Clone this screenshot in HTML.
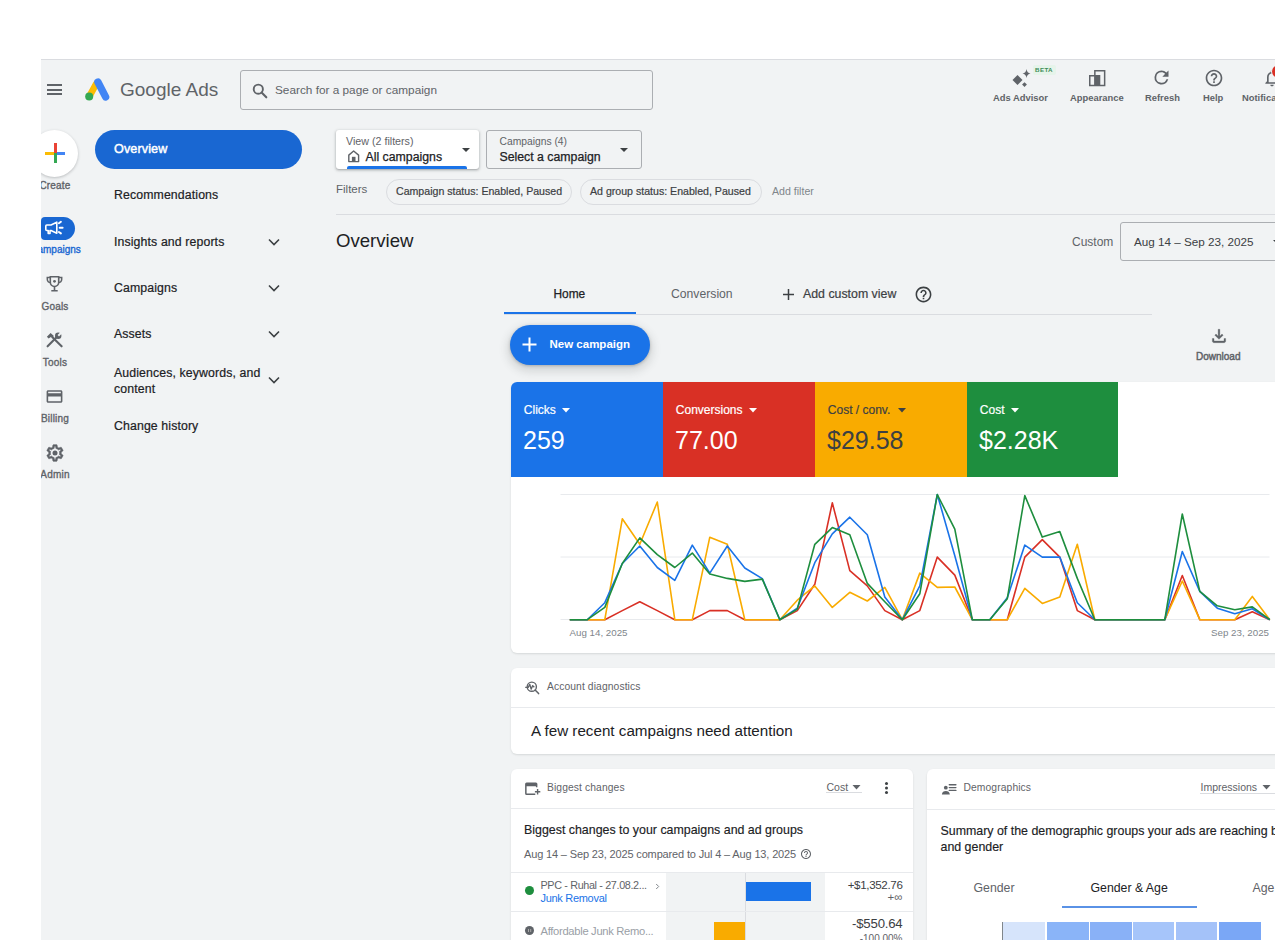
<!DOCTYPE html>
<html><head><meta charset="utf-8">
<style>
*{box-sizing:border-box;margin:0;padding:0}
html,body{width:1275px;height:940px;overflow:hidden;background:#fff;font-family:"Liberation Sans",sans-serif;color:#202124}
.a{position:absolute;white-space:nowrap}
#app{position:absolute;left:41px;top:59px;width:1234px;height:881px;background:#f1f3f4;border-top:1px solid #dadce0}
.card{position:absolute;background:#fff;border-radius:6px;box-shadow:0 1px 2px rgba(60,64,67,.15)}
.rl{position:absolute;font-size:10px;color:#5f6368;font-weight:400;-webkit-text-stroke:.35px currentColor;letter-spacing:.2px;text-align:center;width:60px;left:25px;margin-top:1px}
.nav{position:absolute;left:114px;font-size:12.3px;color:#202124;letter-spacing:.12px;-webkit-text-stroke:.2px currentColor}
.chev{position:absolute;left:268px;width:12px;height:8px}
.tl{position:absolute;font-size:9.4px;font-weight:700;color:#5f6368}
.chip{border:1px solid #dadce0;border-radius:13px}
.tile{position:absolute;top:0;height:95.5px;color:#fff}
.tl2{position:absolute;left:13.3px;top:21px;font-size:12px;color:#fff;-webkit-text-stroke:.2px currentColor}
.tri{position:absolute;left:51px;top:26px;width:8px;height:5px}
.tv{position:absolute;left:12.5px;top:44px;font-size:25px;color:#fff}
</style></head><body>
<div id="app"></div>

<!-- header -->
<div class="a" style="left:47px;top:84px;width:15px;height:2px;background:#5f6368"></div>
<div class="a" style="left:47px;top:88.5px;width:15px;height:2px;background:#5f6368"></div>
<div class="a" style="left:47px;top:93px;width:15px;height:2px;background:#5f6368"></div>
<svg class="a" style="left:84px;top:78px" width="28" height="24" viewBox="0 0 28 24">
  <path d="M12.2 5.8 L5.2 18.6" stroke="#fbbc04" stroke-width="6.6" stroke-linecap="round"/>
  <path d="M13.9 4 L21.6 18.9" stroke="#4285f4" stroke-width="7.4" stroke-linecap="round"/>
  <circle cx="5.2" cy="18.6" r="4" fill="#34a853"/>
</svg>
<div class="a" style="left:120px;top:79px;font-size:19px;color:#5f6368">Google Ads</div>
<div class="a" style="left:240px;top:70px;width:413px;height:40px;border:1px solid #abaeb2;border-radius:3px"></div>
<svg class="a" style="left:251px;top:82px" width="18" height="18" viewBox="0 0 18 18"><circle cx="7.3" cy="7.2" r="4.6" fill="none" stroke="#5f6368" stroke-width="1.9"/><path d="M10.6 10.6 L15.3 15.3" stroke="#5f6368" stroke-width="2.1" stroke-linecap="round"/></svg>
<div class="a" style="left:275px;top:83px;font-size:11.8px;color:#5f6368">Search for a page or campaign</div>

<!-- top right -->
<svg class="a" style="left:1010px;top:66px" width="24" height="24" viewBox="0 0 24 24">
  <path d="M7.5 9 L12.5 14 L7.5 19 L2.5 14Z" fill="#5f6368"/>
  <path d="M16.5 3 Q17 7 20.5 7.5 Q17 8 16.5 12 Q16 8 12.5 7.5 Q16 7 16.5 3Z" fill="#5f6368"/>
  <path d="M14.5 16.2 L16.9 18.6 L14.5 21 L12.1 18.6Z" fill="#5f6368"/>
</svg>
<div class="a" style="left:1032.5px;top:64.5px;width:23px;height:10.5px;border-radius:2px;background:#e6f4ea;font-size:6.2px;font-weight:700;color:#3d8c57;text-align:center;line-height:10.5px;letter-spacing:.35px">BETA</div>
<div class="tl a" style="left:993px;top:92px">Ads Advisor</div>
<svg class="a" style="left:1089px;top:70px" width="17" height="17" viewBox="0 0 17 17">
  <path d="M5.1 0 H16.4 V16.3 H0 V5 H5.1 Z M1.5 6.5 H5.1 V14.8 H1.5 Z M6.6 1.5 H14.9 V14.8 H11.3 V5 H6.6 Z" fill="#5f6368" fill-rule="evenodd"/>
</svg>
<div class="tl a" style="left:1070px;top:92px">Appearance</div>
<svg class="a" style="left:1151px;top:67px" width="21" height="21" viewBox="0 0 24 24"><path d="M17.65 6.35A7.96 7.96 0 0 0 12 4a8 8 0 1 0 7.73 10h-2.08A6 6 0 1 1 12 6c1.66 0 3.14.69 4.22 1.78L13 11h7V4l-2.35 2.35z" fill="#5f6368"/></svg>
<div class="tl a" style="left:1145px;top:92px">Refresh</div>
<svg class="a" style="left:1204px;top:68px" width="20" height="20" viewBox="0 0 24 24"><path d="M11 18h2v-2h-2v2zm1-16C6.48 2 2 6.48 2 12s4.48 10 10 10 10-4.48 10-10S17.52 2 12 2zm0 18c-4.41 0-8-3.59-8-8s3.59-8 8-8 8 3.59 8 8-3.59 8-8 8zm0-14c-2.21 0-4 1.79-4 4h2c0-1.1.9-2 2-2s2 .9 2 2c0 2-3 1.75-3 5h2c0-2.25 3-2.5 3-5 0-2.21-1.79-4-4-4z" fill="#5f6368"/></svg>
<div class="tl a" style="left:1203px;top:92px">Help</div>
<svg class="a" style="left:1262px;top:68px" width="20" height="20" viewBox="0 0 24 24"><path d="M12 22c1.1 0 2-.9 2-2h-4c0 1.1.9 2 2 2zm6-6v-5c0-3.07-1.64-5.64-4.5-6.32V4c0-.83-.67-1.5-1.5-1.5s-1.5.67-1.5 1.5v.68C7.63 5.36 6 7.92 6 11v5l-2 2v1h16v-1l-2-2zm-2 1H8v-6c0-2.48 1.51-4.5 4-4.5s4 2.02 4 4.5v6z" fill="#5f6368"/></svg>
<div class="a" style="left:1271.5px;top:64.5px;width:13px;height:13px;border-radius:50%;background:#d93025;box-shadow:0 0 0 1px #f1f3f4"></div>
<div class="tl a" style="left:1242px;top:92px">Notifications</div>

<!-- left rail -->
<div class="a" style="left:31px;top:130px;width:47px;height:47px;border-radius:50%;background:#fff;box-shadow:0 1px 3px rgba(60,64,67,.3)"></div>
<div class="a" style="left:45px;top:151.5px;width:10px;height:3px;background:#fbbc04"></div>
<div class="a" style="left:55px;top:151.5px;width:10px;height:3px;background:#4285f4"></div>
<div class="a" style="left:54px;top:143px;width:3px;height:10px;background:#ea4335"></div>
<div class="a" style="left:54px;top:153px;width:3px;height:10px;background:#34a853"></div>
<div class="rl" style="top:179px">Create</div>
<div class="a" style="left:41px;top:217px;width:34px;height:22.5px;border-radius:4px 11.5px 11.5px 4px;background:#1967d2"></div>
<svg class="a" style="left:40px;top:216px" width="24" height="24" viewBox="0 0 24 24"><path d="M6.8 9 H11 L16.8 6.2 V17.3 L11 14.5 H10 V17.5 H8.2 V14.5 H6.8 A1 1 0 0 1 5.8 13.5 V10 A1 1 0 0 1 6.8 9Z" fill="none" stroke="#fff" stroke-width="1.6" stroke-linejoin="round"/><path d="M18.9 7.2 L20.9 5.8 M19.7 11.7 H22.6 M18.9 16 L20.9 17.4" stroke="#fff" stroke-width="2" stroke-linecap="round"/></svg>
<div class="rl" style="top:243px;color:#1967d2;letter-spacing:0;left:25.5px">Campaigns</div>
<svg class="a" style="left:46px;top:275px" width="17" height="17" viewBox="0 0 17 17"><path d="M4.3 1.8 H12.7 V7.3 A4.2 4.2 0 0 1 4.3 7.3 Z" fill="none" stroke="#5f6368" stroke-width="1.6"/><path d="M4.3 2.6 H1.3 V4.3 A3.2 3.2 0 0 0 4.6 7.6 M12.7 2.6 H15.7 V4.3 A3.2 3.2 0 0 1 12.4 7.6" fill="none" stroke="#5f6368" stroke-width="1.5"/><path d="M8.5 11.5 V15.3 M5.3 15.7 H11.7" stroke="#5f6368" stroke-width="1.6"/><circle cx="8.5" cy="6.3" r="1.4" fill="#5f6368"/></svg>
<div class="rl" style="top:300px">Goals</div>
<svg class="a" style="left:46px;top:332px" width="17" height="16" viewBox="0 0 17 16"><path d="M15.6 14.3 L6.2 4.9" stroke="#5f6368" stroke-width="2.1" stroke-linecap="round"/><path d="M0.9 4.8 L4.6 1.1 L7.9 3.9 L6.3 5.5 L5.3 4.7 L2.6 6.6 Z" fill="#5f6368"/><path d="M1.6 14.3 L10.3 5.6" stroke="#5f6368" stroke-width="2.1" stroke-linecap="round"/><circle cx="12.2" cy="3.8" r="3.2" fill="#5f6368"/><path d="M12.3 3.7 L15.6 0.4" stroke="#f1f3f4" stroke-width="2"/></svg>
<div class="rl" style="top:356px">Tools</div>
<svg class="a" style="left:45px;top:387px" width="19" height="19" viewBox="0 0 24 24"><path d="M20 4H4c-1.11 0-1.99.89-1.99 2L2 18c0 1.11.89 2 2 2h16c1.11 0 2-.89 2-2V6c0-1.11-.89-2-2-2zm0 14H4v-6h16v6zm0-10H4V6h16v2z" fill="#5f6368"/></svg>
<div class="rl" style="top:412px">Billing</div>
<svg class="a" style="left:44.5px;top:442.5px" width="20" height="20" viewBox="0 0 24 24"><path d="M19.43 12.98c.04-.32.07-.64.07-.98s-.03-.66-.07-.98l2.11-1.65c.19-.15.24-.42.12-.64l-2-3.46a.5.5 0 0 0-.61-.22l-2.49 1c-.52-.4-1.08-.73-1.69-.98l-.38-2.65A.49.49 0 0 0 14 2h-4c-.25 0-.46.18-.49.42l-.38 2.65c-.61.25-1.17.59-1.69.98l-2.49-1a.57.57 0 0 0-.18-.03c-.17 0-.34.09-.43.25l-2 3.46c-.13.22-.07.49.12.64l2.11 1.65c-.04.32-.07.65-.07.98s.03.66.07.98l-2.11 1.65c-.19.15-.24.42-.12.64l2 3.46a.5.5 0 0 0 .61.22l2.49-1c.52.4 1.08.73 1.69.98l.38 2.65c.03.24.24.42.49.42h4c.25 0 .46-.18.49-.42l.38-2.65c.61-.25 1.17-.59 1.69-.98l2.49 1c.06.02.12.03.18.03.17 0 .34-.09.43-.25l2-3.46c.12-.22.07-.49-.12-.64l-2.11-1.65zm-1.98-1.71c.04.31.05.52.05.73 0 .21-.02.43-.05.73l-.14 1.13.89.7 1.08.84-.7 1.21-1.27-.51-1.04-.42-.9.68c-.43.32-.84.56-1.25.73l-1.06.43-.16 1.13-.2 1.35h-1.4l-.19-1.35-.16-1.13-1.06-.43c-.43-.18-.83-.41-1.23-.71l-.91-.7-1.06.43-1.27.51-.7-1.21 1.08-.84.89-.7-.14-1.13c-.03-.31-.05-.54-.05-.74s.02-.43.05-.73l.14-1.13-.89-.7-1.08-.84.7-1.21 1.27.51 1.04.42.9-.68c.43-.32.84-.56 1.25-.73l1.06-.43.16-1.13.2-1.35h1.39l.19 1.35.16 1.13 1.06.43c.43.18.83.41 1.23.71l.91.7 1.06-.43 1.27-.51.7 1.21-1.07.85-.89.7.14 1.13z" fill="#5f6368" stroke="#5f6368" stroke-width=".7"/><circle cx="12" cy="12" r="3" fill="#5f6368"/></svg>
<div class="rl" style="top:468px">Admin</div>

<!-- nav -->
<div class="a" style="left:95px;top:130px;width:207px;height:39px;border-radius:20px;background:#1967d2"></div>
<div class="nav a" style="top:142px;color:#fff;font-weight:400;font-size:12.6px;-webkit-text-stroke:.45px #fff">Overview</div>
<div class="nav a" style="top:188px">Recommendations</div>
<div class="nav a" style="top:235px">Insights and reports</div>
<div class="nav a" style="top:281px">Campaigns</div>
<div class="nav a" style="top:327px">Assets</div>
<div class="nav a" style="top:365px;line-height:16px">Audiences, keywords, and<br>content</div>
<div class="nav a" style="top:419px">Change history</div>
<svg class="chev a" style="top:238px" viewBox="0 0 12 8"><path d="M1 1.5 L6 6.5 L11 1.5" fill="none" stroke="#3c4043" stroke-width="1.6"/></svg>
<svg class="chev a" style="top:284px" viewBox="0 0 12 8"><path d="M1 1.5 L6 6.5 L11 1.5" fill="none" stroke="#3c4043" stroke-width="1.6"/></svg>
<svg class="chev a" style="top:330px" viewBox="0 0 12 8"><path d="M1 1.5 L6 6.5 L11 1.5" fill="none" stroke="#3c4043" stroke-width="1.6"/></svg>
<svg class="chev a" style="top:376px" viewBox="0 0 12 8"><path d="M1 1.5 L6 6.5 L11 1.5" fill="none" stroke="#3c4043" stroke-width="1.6"/></svg>

<!-- MAIN -->

<!-- view/campaign selectors -->
<div class="a" style="left:336px;top:130px;width:143px;height:39px;background:#fff;border-radius:3px;box-shadow:0 1px 2px rgba(60,64,67,.3),0 1px 3px 1px rgba(60,64,67,.15)"></div>
<div class="a" style="left:346px;top:135px;font-size:10.7px;color:#5f6368">View (2 filters)</div>
<svg class="a" style="left:348px;top:150px" width="12" height="13" viewBox="0 0 12 13"><path d="M0.8 11.6 V5.1 L5.65 1 L10.6 5.1 V11.6 Z" fill="none" stroke="#5f6368" stroke-width="1.4" stroke-linejoin="round"/><rect x="3.9" y="6.8" width="3.6" height="4.8" fill="#5f6368"/></svg>
<div class="a" style="left:365.5px;top:150px;font-size:12.3px;color:#202124;-webkit-text-stroke:.25px #202124">All campaigns</div>
<div class="a" style="left:347px;top:166.3px;width:120px;height:3px;border-radius:2px 2px 0 0;background:#1a73e8"></div>
<svg class="a" style="left:461px;top:147px" width="10" height="6" viewBox="0 0 10 6"><path d="M1 1 H9 L5 5Z" fill="#3c4043"/></svg>
<div class="a" style="left:485.5px;top:130px;width:156px;height:39px;border:1px solid #abaeb2;border-radius:3px"></div>
<div class="a" style="left:499.5px;top:136px;font-size:10.3px;color:#5f6368">Campaigns (4)</div>
<div class="a" style="left:499.5px;top:150px;font-size:12.3px;color:#202124;-webkit-text-stroke:.25px #202124">Select a campaign</div>
<svg class="a" style="left:619px;top:147px" width="10" height="6" viewBox="0 0 10 6"><path d="M1 1 H9 L5 5Z" fill="#3c4043"/></svg>

<div class="a" style="left:336px;top:183px;font-size:11.5px;color:#5f6368">Filters</div>
<div class="a chip" style="left:386px;top:179px;width:186px;height:26px"></div>
<div class="a" style="left:396px;top:185px;font-size:10.6px;color:#3c4043;-webkit-text-stroke:.2px #3c4043">Campaign status: Enabled, Paused</div>
<div class="a chip" style="left:579.5px;top:179px;width:182px;height:26px"></div>
<div class="a" style="left:590px;top:185px;font-size:10.6px;color:#3c4043;-webkit-text-stroke:.2px #3c4043">Ad group status: Enabled, Paused</div>
<div class="a" style="left:772px;top:185px;font-size:10.6px;color:#80868b">Add filter</div>
<div class="a" style="left:336px;top:214px;width:939px;height:1px;background:#dadce0"></div>

<div class="a" style="left:336px;top:230px;font-size:18.6px;color:#202124">Overview</div>
<div class="a" style="left:1072px;top:235px;font-size:12px;color:#5f6368">Custom</div>
<div class="a" style="left:1120px;top:222px;width:170px;height:39px;border:1px solid #abaeb2;border-radius:3px"></div>
<div class="a" style="left:1134px;top:235px;font-size:11.7px;color:#3c4043">Aug 14 – Sep 23, 2025</div>
<svg class="a" style="left:1272px;top:239px" width="10" height="6" viewBox="0 0 10 6"><path d="M1 1 H9 L5 5Z" fill="#3c4043"/></svg>

<!-- tabs -->
<div class="a" style="left:504px;top:314px;width:648px;height:1px;background:#dadce0"></div>
<div class="a" style="left:504px;top:312px;width:132px;height:2px;background:#1a73e8"></div>
<div class="a" style="left:553.5px;top:287px;font-size:11.9px;color:#202124;-webkit-text-stroke:.25px #202124">Home</div>
<div class="a" style="left:671px;top:287px;font-size:12.2px;color:#5f6368">Conversion</div>
<svg class="a" style="left:782px;top:288px" width="13" height="13" viewBox="0 0 13 13"><path d="M6.5 1 V12 M1 6.5 H12" stroke="#3c4043" stroke-width="1.5"/></svg>
<div class="a" style="left:803px;top:287px;font-size:12.35px;color:#3c4043;-webkit-text-stroke:.2px #3c4043">Add custom view</div>
<svg class="a" style="left:914px;top:285px" width="19" height="19" viewBox="0 0 24 24"><path d="M11 18h2v-2h-2v2zm1-16C6.48 2 2 6.48 2 12s4.48 10 10 10 10-4.48 10-10S17.52 2 12 2zm0 18c-4.41 0-8-3.59-8-8s3.59-8 8-8 8 3.59 8 8-3.59 8-8 8zm0-14c-2.21 0-4 1.79-4 4h2c0-1.1.9-2 2-2s2 .9 2 2c0 2-3 1.75-3 5h2c0-2.25 3-2.5 3-5 0-2.21-1.79-4-4-4z" fill="#3c4043"/></svg>

<div class="a" style="left:510px;top:325px;width:140px;height:40px;border-radius:20px;background:#1a73e8;box-shadow:0 1px 3px rgba(60,64,67,.3),0 4px 8px 3px rgba(60,64,67,.15)"></div>
<svg class="a" style="left:522px;top:337px" width="15" height="15" viewBox="0 0 15 15"><path d="M7.5 0.5 V14.5 M0.5 7.5 H14.5" stroke="#fff" stroke-width="2"/></svg>
<div class="a" style="left:549.5px;top:337.5px;font-size:11.5px;font-weight:700;color:#fff">New campaign</div>

<svg class="a" style="left:1209px;top:326px" width="20" height="20" viewBox="0 0 24 24"><path d="M18 15v3H6v-3H4v3c0 1.1.9 2 2 2h12c1.1 0 2-.9 2-2v-3h-2zm-1-4l-1.41-1.41L13 12.17V4h-2v8.17L8.41 9.59 7 11l5 5 5-5z" fill="#5f6368" stroke="#5f6368" stroke-width=".4"/></svg>
<div class="a" style="left:1196px;top:351px;font-size:10px;color:#5f6368;-webkit-text-stroke:.45px #5f6368">Download</div>

<!-- chart card -->
<div class="card" style="left:510.5px;top:381.5px;width:800px;height:271.5px;overflow:hidden">
  <div class="tile" style="left:0;width:152px;background:#1a73e8"><div class="tl2">Clicks</div><svg class="tri" viewBox="0 0 8 5"><path d="M0 0H8L4 4.5Z" fill="#fff"/></svg><div class="tv">259</div></div>
  <div class="tile" style="left:152px;width:152px;background:#d93025"><div class="tl2">Conversions</div><svg class="tri" style="left:86px" viewBox="0 0 8 5"><path d="M0 0H8L4 4.5Z" fill="#fff"/></svg><div class="tv">77.00</div></div>
  <div class="tile" style="left:304px;width:152px;background:#f9ab00;color:#3c4043"><div class="tl2" style="color:#3c4043">Cost / conv.</div><svg class="tri" style="left:83px" viewBox="0 0 8 5"><path d="M0 0H8L4 4.5Z" fill="#3c4043"/></svg><div class="tv" style="color:#3c4043">$29.58</div></div>
  <div class="tile" style="left:456px;width:151px;background:#1e8e3e"><div class="tl2">Cost</div><svg class="tri" style="left:44px" viewBox="0 0 8 5"><path d="M0 0H8L4 4.5Z" fill="#fff"/></svg><div class="tv">$2.28K</div></div>
  <svg style="position:absolute;left:0;top:0" width="800" height="272">
    <path d="M49.5 112.5 H758.5 M49.5 175 H758.5 M49.5 237.5 H758.5" stroke="#e8eaed" stroke-width="1"/>
    <polyline points="58.8,237.7 76.3,237.7 93.8,237.7 111.3,228.6 128.8,219.8 146.3,228.6 163.8,237.7 181.3,237.7 198.8,228.6 216.3,228.6 233.8,237.7 251.3,237.7 268.8,237.7 286.3,228.6 303.8,202.3 321.3,120.8 338.8,188.6 356.3,203.9 373.8,228.6 391.3,237.7 408.8,228.6 426.3,175.1 443.8,193.1 461.3,237.7 478.8,237.7 496.3,237.7 513.8,175.1 531.3,157.6 548.8,175.1 566.3,228.6 583.8,237.7 601.3,237.7 618.8,237.7 636.3,237.7 653.8,237.7 671.3,193.5 688.8,237.7 706.3,237.7 723.8,237.7 741.3,229.7 758.8,237.7" fill="none" stroke="#d93025" stroke-width="1.6" stroke-linejoin="round"/>
    <polyline points="58.8,237.7 76.3,237.7 93.8,237.7 111.3,136.8 128.8,162.3 146.3,120.0 163.8,237.7 181.3,237.7 198.8,155.2 216.3,162.3 233.8,237.7 251.3,237.7 268.8,237.7 286.3,218.2 303.8,203.9 321.3,225.4 338.8,210.3 356.3,219.0 373.8,205.4 391.3,237.7 408.8,191.1 426.3,205.4 443.8,205.0 461.3,237.7 478.8,237.7 496.3,237.7 513.8,206.3 531.3,221.4 548.8,215.0 566.3,162.3 583.8,237.7 601.3,237.7 618.8,237.7 636.3,237.7 653.8,237.7 671.3,199.0 688.8,237.7 706.3,237.7 723.8,237.7 741.3,214.4 758.8,237.7" fill="none" stroke="#f9ab00" stroke-width="1.6" stroke-linejoin="round"/>
    <polyline points="58.8,237.7 76.3,237.7 93.8,220.7 111.3,181.5 128.8,164.0 146.3,185.5 163.8,198.3 181.3,163.1 198.8,191.1 216.3,164.0 233.8,186.0 251.3,196.6 268.8,237.7 286.3,226.2 303.8,180.7 321.3,151.9 338.8,135.2 356.3,152.7 373.8,215.0 391.3,237.7 408.8,203.9 426.3,112.5 443.8,173.8 461.3,237.7 478.8,237.7 496.3,215.8 513.8,163.1 531.3,175.1 548.8,175.1 566.3,220.7 583.8,237.7 601.3,237.7 618.8,237.7 636.3,237.7 653.8,237.7 671.3,169.5 688.8,209.4 706.3,226.2 723.8,231.8 741.3,226.8 758.8,237.7" fill="none" stroke="#1a73e8" stroke-width="1.6" stroke-linejoin="round"/>
    <polyline points="58.8,237.7 76.3,237.7 93.8,225.4 111.3,181.5 128.8,155.9 146.3,172.7 163.8,185.5 181.3,171.1 198.8,191.9 216.3,196.4 233.8,199.4 251.3,197.1 268.8,237.7 286.3,227.1 303.8,162.3 321.3,145.6 338.8,152.7 356.3,201.4 373.8,219.8 391.3,237.7 408.8,211.8 426.3,112.5 443.8,147.1 461.3,237.7 478.8,237.7 496.3,216.7 513.8,113.6 531.3,155.1 548.8,149.6 566.3,196.4 583.8,237.7 601.3,237.7 618.8,237.7 636.3,237.7 653.8,237.7 671.3,132.0 688.8,209.4 706.3,223.8 723.8,227.8 741.3,224.9 758.8,237.7" fill="none" stroke="#1e8e3e" stroke-width="1.6" stroke-linejoin="round"/>
  </svg>
  <div class="a" style="left:59px;top:245.5px;font-size:9.75px;color:#80868b">Aug 14, 2025</div>
  <div class="a" style="left:600px;width:158.5px;text-align:right;top:245.5px;font-size:9.75px;color:#80868b">Sep 23, 2025</div>
</div>

<!-- diagnostics -->
<div class="card" style="left:510.5px;top:668px;width:800px;height:85.5px">
  <div class="a" style="left:0;top:39px;width:800px;height:1px;background:#e8eaed"></div>
  <svg class="a" style="left:13px;top:13px" width="17" height="17" viewBox="0 0 17 17"><circle cx="7.8" cy="5.7" r="4.6" fill="none" stroke="#5f6368" stroke-width="1.4"/><path d="M11.1 9 L14.6 12.6" stroke="#5f6368" stroke-width="1.5" stroke-linecap="round"/><path d="M1.2 6.4 H4.2 L5.8 3.4 L7.2 8.2 L8.7 4.6 L10.3 6.3" fill="none" stroke="#5f6368" stroke-width="1.3" stroke-linejoin="round"/></svg>
  <div class="a" style="left:36.5px;top:13px;font-size:10.3px;color:#5f6368;letter-spacing:.1px">Account diagnostics</div>
  <div class="a" style="left:20.5px;top:54px;font-size:15.2px;color:#202124">A few recent campaigns need attention</div>
</div>

<!-- biggest changes -->
<div class="card" style="left:510.5px;top:768.5px;width:402px;height:200px;overflow:hidden">
  <div class="a" style="left:0;top:39.5px;width:402px;height:1px;background:#e8eaed"></div>
  <svg class="a" style="left:13px;top:13px" width="18" height="15" viewBox="0 0 18 15"><path d="M2.6 0.6 H11.9 A1.5 1.5 0 0 1 13.4 2.1 V5.2 H11.9 V4.2 H2.6 V11.6 H11.3 V13.1 H2.6 A1.5 1.5 0 0 1 1.1 11.6 V2.1 A1.5 1.5 0 0 1 2.6 0.6Z" fill="#5f6368"/><path d="M13.6 7.1 V12.5 M10.9 9.8 H16.3" stroke="#5f6368" stroke-width="1.4"/></svg>
  <div class="a" style="left:36.5px;top:13px;font-size:10.3px;color:#5f6368;letter-spacing:.1px">Biggest changes</div>
  <div class="a" style="left:316px;top:12px;font-size:10.5px;color:#5f6368">Cost</div>
  <svg class="a" style="left:341px;top:16px" width="9" height="5" viewBox="0 0 9 5"><path d="M0.5 0H8.5L4.5 4.5Z" fill="#5f6368"/></svg>
  <div class="a" style="left:315.5px;top:23.5px;width:36px;height:1px;background:#dadce0"></div>
  <div class="a" style="left:374px;top:13px;width:3px;height:3px;border-radius:2px;background:#3c4043;box-shadow:0 4.5px 0 #3c4043,0 9px 0 #3c4043"></div>
  <div class="a" style="left:13.5px;top:54px;font-size:12.4px;color:#202124;-webkit-text-stroke:.15px #202124">Biggest changes to your campaigns and ad groups</div>
  <div class="a" style="left:13.5px;top:79px;font-size:11px;color:#5f6368;letter-spacing:-.15px">Aug 14 – Sep 23, 2025 compared to Jul 4 – Aug 13, 2025</div>
  <svg class="a" style="left:289px;top:79px" width="12" height="12" viewBox="0 0 24 24"><path d="M11 18h2v-2h-2v2zm1-16C6.48 2 2 6.48 2 12s4.48 10 10 10 10-4.48 10-10S17.52 2 12 2zm0 18c-4.41 0-8-3.59-8-8s3.59-8 8-8 8 3.59 8 8-3.59 8-8 8zm0-14c-2.21 0-4 1.79-4 4h2c0-1.1.9-2 2-2s2 .9 2 2c0 2-3 1.75-3 5h2c0-2.25 3-2.5 3-5 0-2.21-1.79-4-4-4z" fill="#5f6368"/></svg>
  <div class="a" style="left:0;top:103px;width:402px;height:1px;background:#e8eaed"></div>
  <div class="a" style="left:155px;top:104px;width:159px;height:100px;background:#f1f3f4"></div>
  <div class="a" style="left:234px;top:104px;width:1px;height:100px;background:#dadce0"></div>
  <div class="a" style="left:0;top:142px;width:402px;height:1px;background:#e8eaed"></div>
  <div class="a" style="left:14.3px;top:117.6px;width:9.2px;height:9.2px;border-radius:50%;background:#1e8e3e"></div>
  <div class="a" style="left:30px;top:110px;font-size:10.8px;color:#5f6368;letter-spacing:-.35px">PPC - Ruhal - 27.08.2...</div>
  <svg class="a" style="left:144px;top:114px" width="5" height="7" viewBox="0 0 5 7"><path d="M1.2 1 L3.7 3.5 L1.2 6" fill="none" stroke="#80868b" stroke-width="1"/></svg>
  <div class="a" style="left:30px;top:123px;font-size:11px;color:#1a73e8;letter-spacing:-.3px">Junk Removal</div>
  <div class="a" style="left:235px;top:113px;width:65px;height:19.5px;background:#1a73e8"></div>
  <div class="a" style="left:280px;top:109px;width:112px;text-align:right;font-size:11.6px;letter-spacing:-.35px;color:#3c4043">+$1,352.76</div>
  <div class="a" style="left:280px;top:122px;width:112px;text-align:right;font-size:11.5px;color:#5f6368">+∞</div>
  <div class="a" style="left:14.3px;top:157px;width:9.2px;height:9.2px;border-radius:50%;background:#5f6368"><div style="position:absolute;left:3px;top:3px;width:1px;height:3.2px;background:#aaa;box-shadow:2.2px 0 0 #aaa"></div></div>
  <div class="a" style="left:30px;top:156px;font-size:11.2px;color:#9aa0a6;letter-spacing:-.3px">Affordable Junk Remo...</div>
  <div class="a" style="left:203.5px;top:153px;width:30.5px;height:40px;background:#f9ab00"></div>
  <div class="a" style="left:280px;top:147.5px;width:112px;text-align:right;font-size:13.2px;letter-spacing:-.2px;color:#3c4043">-$550.64</div>
  <div class="a" style="left:280px;top:164px;width:112px;text-align:right;font-size:10px;color:#5f6368">-100.00%</div>
</div>

<!-- demographics -->
<div class="card" style="left:927px;top:768.5px;width:400px;height:200px;overflow:hidden">
  <div class="a" style="left:0;top:40px;width:400px;height:1px;background:#e8eaed"></div>
  <svg class="a" style="left:14px;top:14px" width="16" height="13" viewBox="0 0 16 13"><circle cx="4.8" cy="4.7" r="1.9" fill="#5f6368"/><path d="M0.9 11.4 C0.9 6.9 8.8 6.9 8.8 11.4Z" fill="#5f6368"/><path d="M8.3 1.7 H14.9 M8.3 4.6 H14.9 M8.3 7.4 H14.9" stroke="#5f6368" stroke-width="1.4" stroke-linecap="round"/></svg>
  <div class="a" style="left:36.5px;top:13px;font-size:10.3px;color:#5f6368;letter-spacing:.1px">Demographics</div>
  <div class="a" style="left:273.5px;top:12px;font-size:10.5px;color:#5f6368">Impressions</div>
  <svg class="a" style="left:335px;top:16px" width="9" height="5" viewBox="0 0 9 5"><path d="M0.5 0H8.5L4.5 4.5Z" fill="#5f6368"/></svg>
  <div class="a" style="left:273px;top:24.5px;width:80px;height:1px;background:#dadce0"></div>
  <div class="a" style="left:13.5px;top:54px;font-size:12.4px;line-height:16.5px;color:#202124;-webkit-text-stroke:.15px #202124">Summary of the demographic groups your ads are reaching by age<br>and gender</div>
  <div class="a" style="left:46.5px;top:112px;font-size:12.3px;color:#5f6368">Gender</div>
  <div class="a" style="left:163.5px;top:112px;font-size:12.3px;color:#202124">Gender &amp; Age</div>
  <div class="a" style="left:325.5px;top:112px;font-size:12.3px;color:#5f6368">Age</div>
  <div class="a" style="left:134.5px;top:137px;width:135px;height:2.5px;background:#5a92e6"></div>
  <div class="a" style="left:75px;top:153px;width:1.2px;height:50px;background:#80868b;z-index:2"></div>
  <div class="a" style="left:76.2px;top:153px;width:41.8px;height:50px;background:#d6e4fb"></div>
  <div class="a" style="left:120px;top:153px;width:41.5px;height:50px;background:#8ab4f8"></div>
  <div class="a" style="left:163px;top:153px;width:41.5px;height:50px;background:#89b1f7"></div>
  <div class="a" style="left:206px;top:153px;width:41px;height:50px;background:#a6c5fa"></div>
  <div class="a" style="left:249px;top:153px;width:41px;height:50px;background:#a4c2f9"></div>
  <div class="a" style="left:291.5px;top:153px;width:42px;height:50px;background:#7aa7f6"></div>
</div>

<div class="a" style="left:0;top:0;width:41px;height:940px;background:#fff;z-index:50"></div><div class="a" style="left:0;top:0;width:1275px;height:59px;background:#fff;z-index:50"></div>
</body></html>
